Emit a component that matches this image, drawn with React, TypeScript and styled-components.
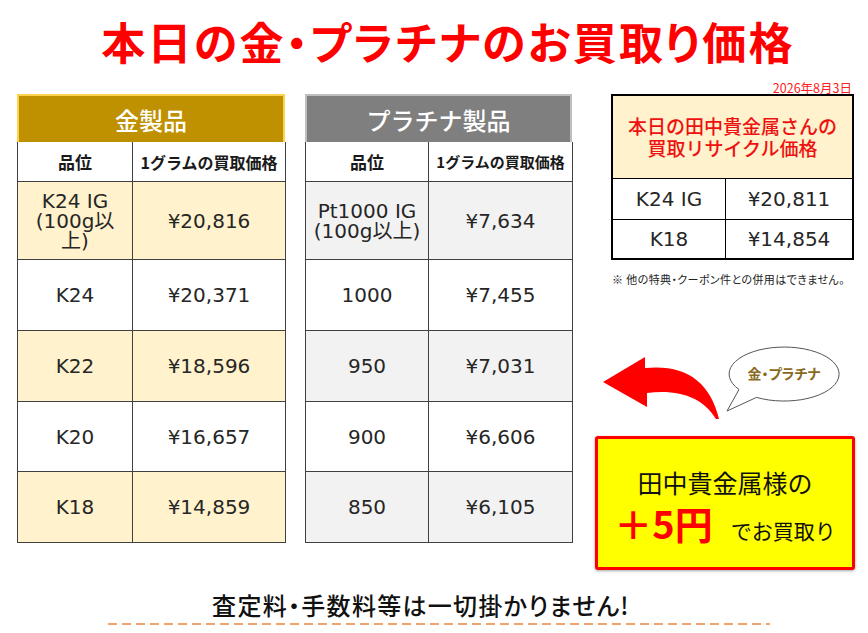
import React from 'react';
import styled, { createGlobalStyle } from 'styled-components';

const GlobalStyle = createGlobalStyle`
  html, body {
    margin: 0;
    padding: 0;
    background: #ffffff;
  }
  body {
    font-family: "Noto Sans CJK JP", sans-serif;
  }
`;

const Page = styled.div`
  width: 868px;
  height: 633px;
  overflow: hidden;
  display: flex;
  flex-direction: column;
`;

const TitleBar = styled.div`
  height: 82px;
  display: flex;
  align-items: center;
  justify-content: center;
`;

const Title = styled.h1`
  margin: 0 0 0 28px;
  font-size: 44px;
  line-height: 1;
  font-weight: 700;
  color: #ff0000;
  font-feature-settings: "palt";
  letter-spacing: 2.3px;
`;

const Main = styled.div`
  display: flex;
  align-items: flex-start;
  padding-left: 17px;
  height: 488px;
`;

const Sheet = styled.div<{ $width: number; $gap: number }>`
  width: ${p => p.$width}px;
  margin-top: 12px;
  margin-right: ${p => p.$gap}px;
  display: flex;
  flex-direction: column;
`;

const Banner = styled.div<{ $bg: string; $edge: string }>`
  height: 48px;
  box-sizing: border-box;
  border: 2px solid ${p => p.$edge};
  border-bottom: none;
  background: ${p => p.$bg};
  color: #ffffff;
  font-size: 24px;
  font-weight: 500;
  display: flex;
  align-items: center;
  justify-content: center;
`;

const Grid = styled.div<{ $cols: string; $rows: string }>`
  display: grid;
  grid-template-columns: ${p => p.$cols};
  grid-template-rows: ${p => p.$rows};
  border-left: 1px solid #404040;
`;

const Cell = styled.div<{ $bg?: string }>`
  box-sizing: border-box;
  border-right: 1px solid #404040;
  border-bottom: 1px solid #404040;
  background: ${p => p.$bg || '#ffffff'};
  display: flex;
  flex-direction: column;
  align-items: center;
  justify-content: center;
  text-align: center;
`;

const HeadText = styled.span<{ $size: number }>`
  font-size: ${p => p.$size}px;
  font-weight: 700;
  color: #1a1a1a;
`;

const ValueText = styled.span`
  display: block;
  font-family: "DejaVu Sans", "Noto Sans CJK JP", sans-serif;
  font-size: 20px;
  line-height: 20px;
  color: #262626;
`;

const Side = styled.div`
  width: 260px;
  display: flex;
  flex-direction: column;
`;

const DateLine = styled.div`
  height: 12px;
  line-height: 12px;
  font-size: 12.5px;
  color: #ff2020;
  text-align: right;
  padding-right: 3px;
`;

const RecycleTable = styled.div`
  margin-left: 16px;
  width: 243px;
  box-sizing: border-box;
  border: 2px solid #000000;
  display: grid;
  grid-template-columns: 113px 1fr;
  grid-template-rows: 83px 41px 38px;
`;

const RecycleHead = styled.div`
  grid-column: 1 / 3;
  background: #fff2cc;
  border-bottom: 1.5px solid #000000;
  display: flex;
  flex-direction: column;
  align-items: center;
  justify-content: center;
  color: #ee1111;
  font-size: 19px;
  font-weight: 500;
`;

const HeadLine = styled.span`
  display: block;
  line-height: 22px;
`;

const RecycleCell = styled.div<{ $first?: boolean; $last?: boolean }>`
  box-sizing: border-box;
  border-right: ${p => (p.$first ? '1.5px solid #000' : 'none')};
  border-bottom: ${p => (p.$last ? 'none' : '1.5px solid #000')};
  display: flex;
  align-items: center;
  justify-content: center;
`;

const Note = styled.div`
  margin-top: 12px;
  padding-left: 17px;
  font-size: 11px;
  line-height: 14px;
  color: #222222;
  white-space: nowrap;
  font-feature-settings: "palt";
  letter-spacing: 0.4px;
`;

const Callout = styled.svg`
  display: block;
  width: 260px;
  height: 150px;
`;

const BubbleText = styled.text`
  font-family: "Noto Sans CJK JP", sans-serif;
  font-size: 14px;
  font-weight: 700;
  font-feature-settings: "palt";
  fill: #8a6a1e;
`;

const BonusBox = styled.div`
  width: 260px;
  height: 134px;
  box-sizing: border-box;
  border: 3px solid #ff0000;
  border-radius: 3px;
  background: #ffff00;
  box-shadow: 0 1px 3px rgba(0, 0, 0, 0.35);
  padding-top: 28px;
  display: flex;
  flex-direction: column;
  align-items: center;
`;

const BonusLead = styled.div`
  font-size: 25px;
  line-height: 30px;
  color: #111111;
`;

const BonusLine = styled.div`
  margin-top: 4px;
  display: flex;
  align-items: baseline;
  line-height: 44px;
`;

const BonusAmount = styled.span`
  font-size: 38px;
  font-weight: 700;
  color: #ff0000;
`;

const BonusTail = styled.span`
  margin-left: 18px;
  font-size: 21px;
  color: #111111;
`;

const Footer = styled.div`
  margin-top: 20px;
  display: flex;
  flex-direction: column;
`;

const FooterText = styled.div`
  font-size: 24px;
  line-height: 30px;
  font-weight: 500;
  color: #111111;
  text-align: center;
  padding-right: 26px;
  font-feature-settings: "palt";
  letter-spacing: 1.3px;
`;

const DashLine = styled.div`
  margin: 3px 0 0 108px;
  width: 662px;
  height: 2px;
  background: repeating-linear-gradient(to right, #f0a36a 0 9px, transparent 9px 14px);
`;

type Row = { grade: string[]; price: string };

const goldRows: Row[] = [
  { grade: ['K24 IG', '(100g以', '上)'], price: '¥20,816' },
  { grade: ['K24'], price: '¥20,371' },
  { grade: ['K22'], price: '¥18,596' },
  { grade: ['K20'], price: '¥16,657' },
  { grade: ['K18'], price: '¥14,859' },
];

const platinumRows: Row[] = [
  { grade: ['Pt1000 IG', '(100g以上)'], price: '¥7,634' },
  { grade: ['1000'], price: '¥7,455' },
  { grade: ['950'], price: '¥7,031' },
  { grade: ['900'], price: '¥6,606' },
  { grade: ['850'], price: '¥6,105' },
];

const rowHeights = '40px 78px 71px 71px 70px 71px';

type SheetProps = {
  title: string;
  width: number;
  gap: number;
  cols: string;
  bannerBg: string;
  bannerEdge: string;
  stripe: string;
  headSize: number;
  rows: Row[];
};

const PriceSheet = ({ title, width, gap, cols, bannerBg, bannerEdge, stripe, headSize, rows }: SheetProps) => (
  <Sheet $width={width} $gap={gap}>
    <Banner $bg={bannerBg} $edge={bannerEdge}>{title}</Banner>
    <Grid $cols={cols} $rows={rowHeights}>
      <Cell><HeadText $size={17}>品位</HeadText></Cell>
      <Cell><HeadText $size={headSize}>1グラムの買取価格</HeadText></Cell>
      {rows.map((row, idx) => {
        const bg = idx % 2 === 0 ? stripe : '#ffffff';
        return (
          <React.Fragment key={`row-${idx}`}>
            <Cell $bg={bg}>
              {row.grade.map((line, i) => (
                <ValueText key={`line-${i}`}>{line}</ValueText>
              ))}
            </Cell>
            <Cell $bg={bg}><ValueText>{row.price}</ValueText></Cell>
          </React.Fragment>
        );
      })}
    </Grid>
  </Sheet>
);

const App = () => {
  return (
    <>
      <GlobalStyle />
      <Page>
        <TitleBar>
          <Title>本日の金・プラチナのお買取り価格</Title>
        </TitleBar>
        <Main>
          <PriceSheet
            title="金製品"
            width={268}
            gap={20}
            cols="115px 153px"
            bannerBg="#bf9000"
            bannerEdge="#ffd24d"
            stripe="#fff2cc"
            headSize={16}
            rows={goldRows}
          />
          <PriceSheet
            title="プラチナ製品"
            width={267}
            gap={23}
            cols="123px 144px"
            bannerBg="#7f7f7f"
            bannerEdge="#bfbfbf"
            stripe="#f2f2f2"
            headSize={15}
            rows={platinumRows}
          />
          <Side>
            <DateLine>2026年8月3日</DateLine>
            <RecycleTable>
              <RecycleHead>
                <HeadLine>本日の田中貴金属さんの</HeadLine>
                <HeadLine>買取リサイクル価格</HeadLine>
              </RecycleHead>
              <RecycleCell $first><ValueText>K24 IG</ValueText></RecycleCell>
              <RecycleCell><ValueText>¥20,811</ValueText></RecycleCell>
              <RecycleCell $first $last><ValueText>K18</ValueText></RecycleCell>
              <RecycleCell $last><ValueText>¥14,854</ValueText></RecycleCell>
            </RecycleTable>
            <Note>※ 他の特典・クーポン件との併用はできません。</Note>
            <Callout viewBox="0 0 260 150">
              <path
                d="M50,82 L50,71 L8,96 L52,121 L52,107 C85,103 108,112 121,133 L124,133 C115,95 90,78 50,82 Z"
                fill="#ff0000"
              />
              <path
                d="M144,103.5 L132,125 L161.5,111.4 A55,27 0 1 0 144,103.5 Z"
                fill="#ffffff"
                stroke="#555555"
                strokeWidth="1"
              />
              <BubbleText x="189" y="93" textAnchor="middle">金・プラチナ</BubbleText>
            </Callout>
            <BonusBox>
              <BonusLead>田中貴金属様の</BonusLead>
              <BonusLine>
                <BonusAmount>＋5円</BonusAmount>
                <BonusTail>でお買取り</BonusTail>
              </BonusLine>
            </BonusBox>
          </Side>
        </Main>
        <Footer>
          <FooterText>査定料・手数料等は一切掛かりません!</FooterText>
          <DashLine />
        </Footer>
      </Page>
    </>
  );
};

export default App;
